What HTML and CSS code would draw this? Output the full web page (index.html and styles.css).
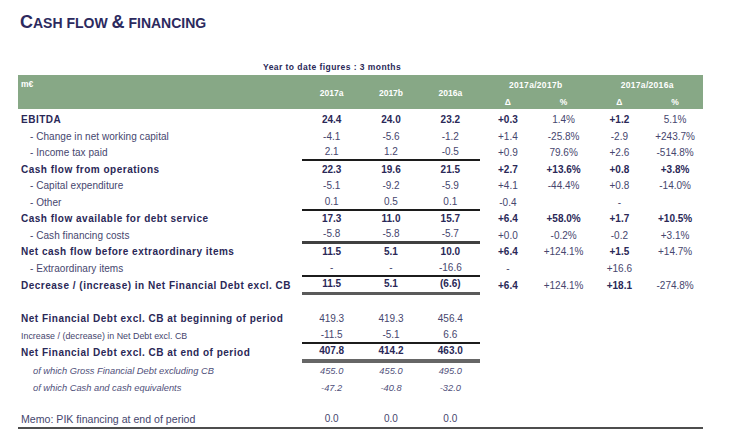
FILE: index.html
```html
<!DOCTYPE html>
<html lang="en">
<head>
<meta charset="utf-8">
<title>Cash flow &amp; financing</title>
<link rel="stylesheet" href="styles.css">
</head>
<body>
<div class="page">
  <h1 class="title">C<span class="sm">ASH FLOW </span>&amp;<span class="sm"> FINANCING</span></h1>
  <div class="ytd">Year to date figures : 3 months</div>
  <div class="sheet">
    <div class="head">
      <span class="h-unit">m€</span>
      <span class="h-year">2017a</span>
      <span class="h-year">2017b</span>
      <span class="h-year">2016a</span>
      <span class="h-grp g1">2017a/2017b</span>
      <span class="h-grp g2">2017a/2016a</span>
      <span class="h-sub">Δ</span>
      <span class="h-sub">%</span>
      <span class="h-sub">Δ</span>
      <span class="h-sub">%</span>
    </div>
    <div class="body">
      <div class="row bold">
        <span class="lbl">EBITDA</span><span>24.4</span><span>24.0</span><span>23.2</span><span>+0.3</span><span class="reg">1.4%</span><span>+1.2</span><span class="reg">5.1%</span>
      </div>
      <div class="row sub">
        <span class="lbl">- Change in net working capital</span><span>-4.1</span><span>-5.6</span><span>-1.2</span><span>+1.4</span><span>-25.8%</span><span>-2.9</span><span>+243.7%</span>
      </div>
      <div class="row sub ln">
        <span class="lbl">- Income tax paid</span><span>2.1</span><span>1.2</span><span>-0.5</span><span>+0.9</span><span>79.6%</span><span>+2.6</span><span>-514.8%</span>
      </div>
      <div class="row bold">
        <span class="lbl">Cash flow from operations</span><span>22.3</span><span>19.6</span><span>21.5</span><span>+2.7</span><span>+13.6%</span><span>+0.8</span><span>+3.8%</span>
      </div>
      <div class="row sub">
        <span class="lbl">- Capital expenditure</span><span>-5.1</span><span>-9.2</span><span>-5.9</span><span>+4.1</span><span>-44.4%</span><span>+0.8</span><span>-14.0%</span>
      </div>
      <div class="row sub ln">
        <span class="lbl">- Other</span><span>0.1</span><span>0.5</span><span>0.1</span><span>-0.4</span><span></span><span>-</span><span></span>
      </div>
      <div class="row bold">
        <span class="lbl">Cash flow available for debt service</span><span>17.3</span><span>11.0</span><span>15.7</span><span>+6.4</span><span>+58.0%</span><span>+1.7</span><span>+10.5%</span>
      </div>
      <div class="row sub ln-thick">
        <span class="lbl">- Cash financing costs</span><span>-5.8</span><span>-5.8</span><span>-5.7</span><span>+0.0</span><span>-0.2%</span><span>-0.2</span><span>+3.1%</span>
      </div>
      <div class="row bold">
        <span class="lbl">Net cash flow before extraordinary items</span><span>11.5</span><span>5.1</span><span>10.0</span><span>+6.4</span><span class="reg">+124.1%</span><span>+1.5</span><span class="reg">+14.7%</span>
      </div>
      <div class="row sub ln">
        <span class="lbl">- Extraordinary items</span><span>-</span><span>-</span><span>-16.6</span><span>-</span><span></span><span>+16.6</span><span></span>
      </div>
      <div class="row bold ln-dec">
        <span class="lbl">Decrease / (increase) in Net Financial Debt excl. CB</span><span>11.5</span><span>5.1</span><span>(6.6)</span><span>+6.4</span><span class="reg">+124.1%</span><span>+18.1</span><span class="reg">-274.8%</span>
      </div>

      <div class="gap gap1"></div>

      <div class="row bold">
        <span class="lbl">Net Financial Debt excl. CB at beginning of period</span><span class="reg">419.3</span><span class="reg">419.3</span><span class="reg">456.4</span>
      </div>
      <div class="row small ln">
        <span class="lbl">Increase / (decrease) in Net Debt excl. CB</span><span>-11.5</span><span>-5.1</span><span>6.6</span>
      </div>
      <div class="row bold ln-end">
        <span class="lbl">Net Financial Debt excl. CB at end of period</span><span>407.8</span><span>414.2</span><span>463.0</span>
      </div>
      <div class="row ital">
        <span class="lbl">of which Gross Financial Debt excluding CB</span><span>455.0</span><span>455.0</span><span>495.0</span>
      </div>
      <div class="row ital">
        <span class="lbl">of which Cash and cash equivalents</span><span>-47.2</span><span>-40.8</span><span>-32.0</span>
      </div>

      <div class="gap gap2"></div>

      <div class="row memo">
        <span class="lbl">Memo: PIK financing at end of period</span><span>0.0</span><span>0.0</span><span>0.0</span>
      </div>
    </div>
  </div>
</div>
</body>
</html>
```

FILE: styles.css
```css
:root {
  --cols: 284px repeat(3, 59.333px) repeat(4, 55.75px);
  --navy: #2a2857;
  --reg: #46466e;
}

body {
  margin: 0;
  background: #ffffff;
  font-family: "Liberation Sans", Arial, sans-serif;
  color: var(--navy);
}

.page {
  padding: 11px 0 0 18px;
}

.title {
  margin: 0 0 0 2px;
  font-size: 18px;
  line-height: 22px;
  font-weight: bold;
  color: #2c2a5e;
}

.title .sm {
  font-size: 14px;
  line-height: 1;
}

.ytd {
  margin-top: 29px;
  padding-left: 245px;
  font-size: 8.5px;
  line-height: 10px;
  font-weight: bold;
  letter-spacing: 0.45px;
  color: var(--navy);
}

.sheet {
  width: 685px;
  margin-top: 3px;
}

.head {
  display: grid;
  grid-template-columns: var(--cols);
  grid-template-rows: 17px 17px;
  background: #87a886;
  color: #ffffff;
  font-weight: bold;
  font-size: 8.5px;
  line-height: 10px;
}

.head > span {
  display: flex;
  justify-content: center;
  align-items: center;
}

.h-unit {
  grid-row: 1 / 3;
  grid-column: 1;
  justify-content: flex-start !important;
  align-items: flex-start !important;
  padding: 4px 0 0 3px;
}

.h-year {
  grid-row: 1 / 3;
  padding-top: 1px;
}

.h-grp {
  grid-row: 1;
  padding-top: 3px;
  letter-spacing: 0.3px;
}

.g1 { grid-column: 5 / 7; }
.g2 { grid-column: 7 / 9; }

.h-sub {
  grid-row: 2;
  padding-top: 2px;
}

.body {
  padding-top: 2.75px;
}

.row {
  display: grid;
  grid-template-columns: var(--cols);
  height: 16.5px;
  font-size: 10px;
  line-height: 12px;
}

.row > span {
  display: flex;
  align-items: center;
  justify-content: center;
  box-sizing: border-box;
  white-space: nowrap;
}

.row > .lbl {
  justify-content: flex-start;
  padding-left: 3px;
}

.bold {
  font-weight: bold;
  color: var(--navy);
}

.bold > .lbl {
  letter-spacing: 0.5px;
}

.bold > .reg {
  font-weight: normal;
  color: var(--reg);
}

.sub {
  color: var(--reg);
}

.sub > .lbl {
  padding-left: 12px;
  letter-spacing: 0.05px;
}

.small {
  color: var(--reg);
}

.small > .lbl {
  font-size: 8.9px;
}

.ital {
  color: #50507a;
  font-style: italic;
  font-size: 9.3px;
}

.ital > .lbl {
  padding-left: 15px;
}

.memo {
  color: var(--reg);
  height: 16.5px;
  border-bottom: 2px solid #4e4e4e;
}

.memo > .lbl {
  font-size: 10.6px;
}

.ln > span:nth-child(n+2):nth-child(-n+4) {
  border-bottom: 2px solid #1c1c1c;
}

.ln-thick > span:nth-child(n+2):nth-child(-n+4) {
  border-bottom: 3px solid #404040;
}

.ln-dec {
  height: 18px;
}

.ln-dec > span:nth-child(n+2):nth-child(-n+4) {
  border-bottom: 3px solid #5a5a5a;
}

.ln-end {
  height: 19px;
}

.ln-end > span:nth-child(n+2):nth-child(-n+4) {
  border-bottom: 4px solid #666666;
}

.gap1 { height: 16px; }
.gap2 { height: 15px; }
```
